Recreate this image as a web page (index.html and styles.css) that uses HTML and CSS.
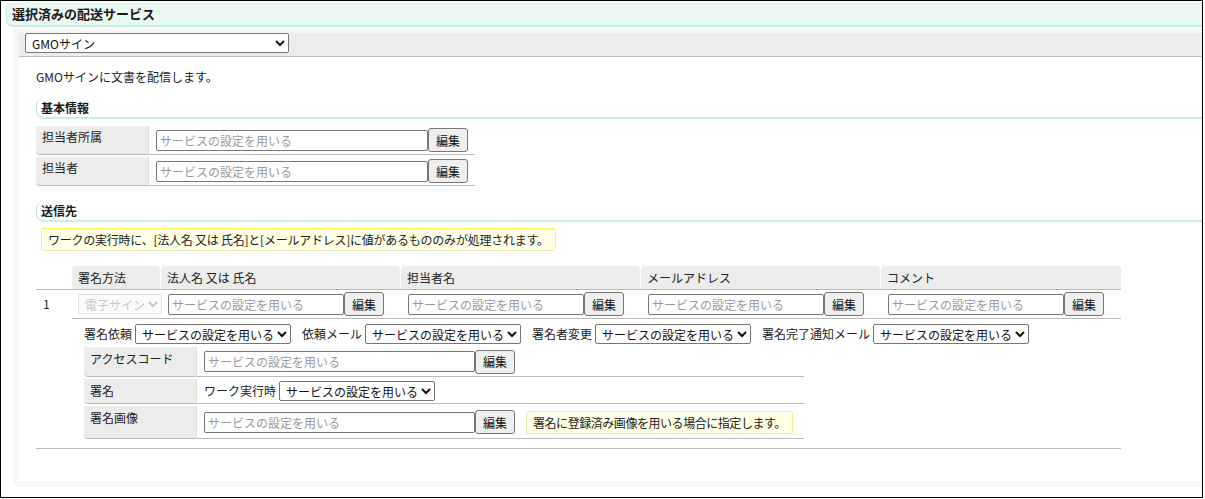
FILE: index.html
```html
<!DOCTYPE html>
<html lang="ja">
<head>
<meta charset="utf-8">
<title>選択済みの配送サービス</title>
<link rel="stylesheet" href="styles.css">
</head>
<body>
<div class="frame">
  <div class="title">選択済みの配送サービス</div>
  <div class="panel">
    <div class="panel-head">
      <select class="sel sel-svc"><option>GMOサイン</option></select>
    </div>
    <div class="panel-body">
      <p class="desc">GMOサインに文書を配信します。</p>
      <div class="sec">基本情報</div>
      <div class="kv">
        <div class="kv-row">
          <div class="kv-label">担当者所属</div>
          <div class="kv-value"><input class="txt w272" placeholder="サービスの設定を用いる"><button class="btn">編集</button></div>
        </div>
        <div class="kv-row">
          <div class="kv-label">担当者</div>
          <div class="kv-value"><input class="txt w272" placeholder="サービスの設定を用いる"><button class="btn">編集</button></div>
        </div>
      </div>
      <div class="sec sec-send">送信先</div>
      <div class="note note-main">ワークの実行時に、[法人名 又は 氏名]と[メールアドレス]に値があるもののみが処理されます。</div>
      <div class="rcpt">
        <div class="rcpt-head">
          <div class="c-no"></div>
          <div class="th th-method">署名方法</div>
          <div class="th th-col">法人名 又は 氏名</div>
          <div class="th th-col">担当者名</div>
          <div class="th th-col">メールアドレス</div>
          <div class="th th-last">コメント</div>
        </div>
        <div class="rcpt-item">
          <div class="c-no num">1</div>
          <div class="rcpt-main">
            <div class="rcpt-row">
              <div class="td td-method"><select class="sel sel-method" disabled><option>電子サイン</option></select></div>
              <div class="td td-col"><input class="txt w176" placeholder="サービスの設定を用いる"><button class="btn">編集</button></div>
              <div class="td td-col"><input class="txt w176" placeholder="サービスの設定を用いる"><button class="btn">編集</button></div>
              <div class="td td-col"><input class="txt w176" placeholder="サービスの設定を用いる"><button class="btn">編集</button></div>
              <div class="td td-col"><input class="txt w176" placeholder="サービスの設定を用いる"><button class="btn">編集</button></div>
            </div>
            <div class="rcpt-sub">
              <div class="opts">
                <span class="opt-label">署名依頼</span><select class="sel sel-opt"><option>サービスの設定を用いる</option></select>
                <span class="opt-label">依頼メール</span><select class="sel sel-opt"><option>サービスの設定を用いる</option></select>
                <span class="opt-label">署名者変更</span><select class="sel sel-opt"><option>サービスの設定を用いる</option></select>
                <span class="opt-label">署名完了通知メール</span><select class="sel sel-opt"><option>サービスの設定を用いる</option></select>
              </div>
              <div class="detail">
                <div class="d-row">
                  <div class="d-label">アクセスコード</div>
                  <div class="d-value"><input class="txt w271" placeholder="サービスの設定を用いる"><button class="btn">編集</button></div>
                </div>
                <div class="d-row">
                  <div class="d-label">署名</div>
                  <div class="d-value d-value-sign"><span class="inline-label">ワーク実行時</span><select class="sel sel-opt"><option>サービスの設定を用いる</option></select></div>
                </div>
                <div class="d-row">
                  <div class="d-label">署名画像</div>
                  <div class="d-value d-value-img"><input class="txt w271" placeholder="サービスの設定を用いる"><button class="btn">編集</button><div class="note note-img">署名に登録済み画像を用いる場合に指定します。</div></div>
                </div>
              </div>
            </div>
          </div>
        </div>
      </div>
    </div>
  </div>
</div>
</body>
</html>
```

FILE: styles.css
```css
* { box-sizing: border-box; }
html, body { margin: 0; padding: 0; background: #fff; }
body {
  font-family: "Noto Sans CJK JP", "Noto Sans", sans-serif;
  font-size: 12px;
  line-height: 18px;
  color: #222;
}
.frame {
  width: 1203px;
  height: 498px;
  border: 1px solid #000;
  display: flex;
  flex-direction: column;
  overflow: hidden;
}
.title {
  margin: 1px 0 0 5px;
  height: 25px;
  background: #eaf8f2;
  border-left: 1px solid #bfeedd;
  border-bottom: 2px solid #c2eedf;
  border-radius: 7px 0 0 7px;
  padding-left: 5px;
  font-size: 13px;
  font-weight: bold;
  line-height: 23px;
  color: #1a1a1a;
}
.panel {
  flex: 1;
  margin: 1px 0 10px 12px;
  background: #f6f6f6;
  padding: 5px 0 6px 6px;
  border-radius: 0 0 0 6px;
  display: flex;
  flex-direction: column;
}
.panel-head {
  height: 24px;
  background: #ececec;
  border-bottom: 1px solid #bdbdbd;
  padding: 0 6px;
}
.panel-body {
  flex: 1;
  background: #fff;
  padding: 11px 0 0 17px;
}
.desc { margin: 0; line-height: 18px; }

.sel {
  font-family: "Noto Sans CJK JP", "Noto Sans", sans-serif;
  font-size: 12px;
  height: 20px;
  border: 1px solid #767676;
  border-radius: 2px;
  background: #fff;
  color: #111;
  padding: 0 0 0 2px;
  margin: 0;
  flex: none;
}
.sel-svc { width: 264px; }
.sel-method { width: 84px; color: #b0b0b0; border-color: #d4d4d4; background: #fafafa; }
.sel-opt { width: 156px; }

.txt {
  font-family: "Noto Sans CJK JP", "Noto Sans", sans-serif;
  font-size: 12px;
  height: 21px;
  border: 1px solid #767676;
  border-radius: 2px;
  padding: 0 3px;
  margin: 0;
  color: #333;
  background: #fff;
  flex: none;
}
.txt::placeholder { color: #999; }
.w272 { width: 272px; }
.w271 { width: 271px; }
.w176 { width: 176px; }
.btn {
  font-family: "Noto Sans CJK JP", "Noto Sans", sans-serif;
  font-size: 12px;
  width: 40px;
  height: 24px;
  padding: 0;
  margin: 0;
  border: 1px solid #767676;
  border-radius: 3px;
  background: #efefef;
  color: #111;
  flex: none;
}

.sec {
  margin-top: 12px;
  height: 21px;
  border-left: 1px solid #b8ecd9;
  border-bottom: 2px solid #c6f0e3;
  border-radius: 8px 0 0 8px;
  padding-left: 4px;
  font-weight: bold;
  line-height: 19px;
  color: #1a1a1a;
}
.sec-send { margin-top: 15px; }

.kv {
  margin-top: 7px;
  width: 437px;
  display: flex;
  flex-direction: column;
  gap: 2px;
}
.kv-row, .d-row { display: flex; }
.kv-label, .d-label {
  width: 113px;
  flex: none;
  background: #ececec;
  border-right: 1px solid #dcdcdc;
  border-bottom: 1px solid #bbb;
  border-bottom-left-radius: 4px;
  padding: 2px 6px 0;
}
.kv-value, .d-value {
  flex: 1;
  display: flex;
  align-items: center;
  border-bottom: 1px solid #bbb;
  padding: 2px 7px;
  height: 29px;
}

.note {
  background: #fffee6;
  border: 1px dotted #e2dc3c;
  border-radius: 3px;
  padding: 1px 6px;
  line-height: 19px;
  color: #222;
  white-space: nowrap;
}
.note-main {
  display: inline-block;
  margin: 6px 0 0 5px;
  letter-spacing: -0.24px;
}

.rcpt { margin-top: 15px; width: 1085px; }
.rcpt-head {
  display: flex;
  height: 24px;
  border-bottom: 1px solid #bbb;
}
.c-no { width: 36px; flex: none; }
.th {
  background: #ececec;
  border-radius: 4px 4px 0 0;
  padding-left: 6px;
  line-height: 23px;
  height: 23px;
}
.th-method { width: 88px; }
.th-col { width: 239px; margin-left: 1px; }
.th-last { width: 240px; margin-left: 1px; }

.rcpt-item {
  display: flex;
  border-bottom: 1px solid #bbb;
}
.num { padding: 5px 0 0 7px; line-height: 18px; }
.rcpt-main { width: 1049px; }
.rcpt-row {
  display: flex;
  height: 29px;
  border-bottom: 1px solid #bbb;
}
.td { display: flex; align-items: center; }
.td-method { width: 89px; padding-left: 6px; }
.td-col { width: 240px; padding-left: 7px; }

.rcpt-sub { padding: 5px 0 9px 12px; }
.opts { display: flex; align-items: center; height: 20px; }
.opt-label { margin: 0 3px 0 11px; }
.opt-label:first-child { margin-left: 0; }

.detail {
  margin-top: 3px;
  width: 720px;
  display: flex;
  flex-direction: column;
  gap: 2px;
}
.d-label { padding-top: 3px; }
.d-value { height: 30px; }
.d-value-sign { height: 25px; }
.d-value-img { height: 33px; }
.inline-label { margin-right: 3px; }
.note-img { margin-left: 11px; flex: none; letter-spacing: -0.45px; }
```
